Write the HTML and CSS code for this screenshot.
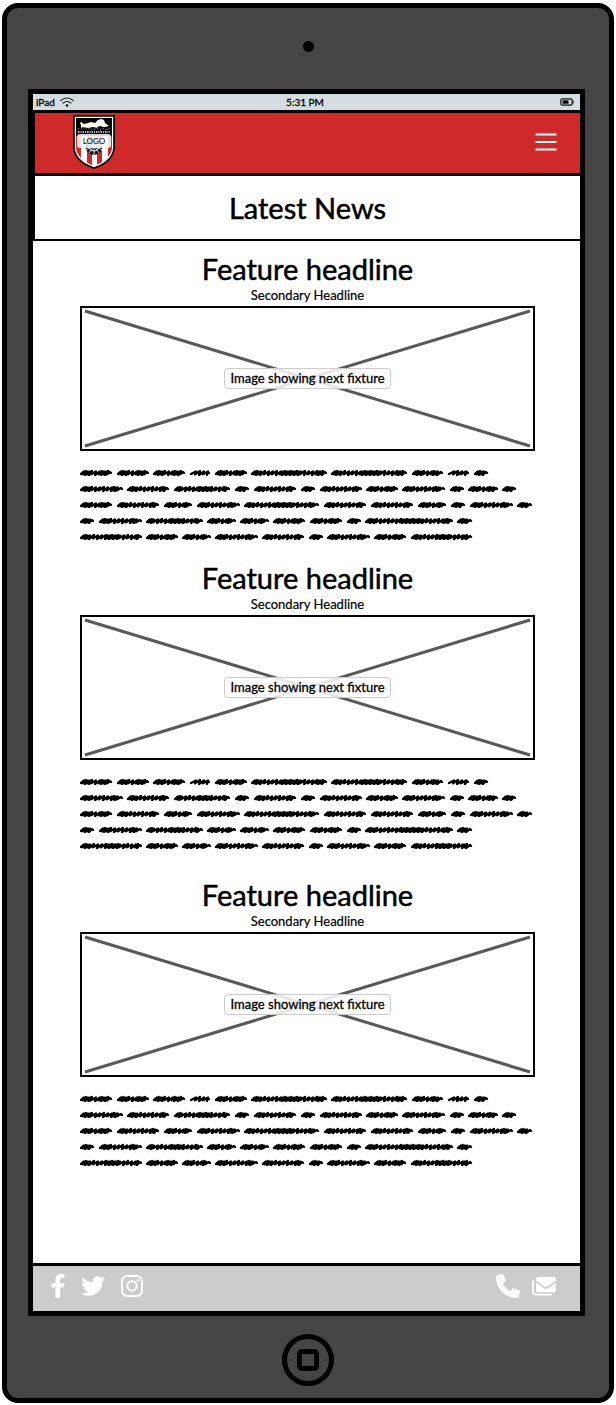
FILE: index.html
```html
<!DOCTYPE html>
<html lang="en">
<head>
<meta charset="utf-8">
<meta name="viewport" content="width=device-width, initial-scale=1">
<title>Latest News</title>
<link rel="stylesheet" href="styles.css">
</head>
<body>
<div class="device">
  <div class="bezel-top"><span class="camera"></span></div>
  <div class="screen">
    <div class="status">
      <span class="carrier">iPad
        <svg class="wifi" viewBox="0 0 14 10" aria-hidden="true"><path d="M.7 3.6Q7-1.6 13.3 3.6M3.2 6Q7 3 10.8 6" fill="none" stroke="#111" stroke-width="1.2" stroke-linecap="round"/><circle cx="7" cy="8.5" r="1.2"/></svg>
      </span>
      <span class="time">5:31 PM</span>
      <span class="power"><svg class="battery" viewBox="0 0 14 8" aria-hidden="true"><rect x=".8" y=".8" width="11.4" height="6.4" rx="1.6" fill="none" stroke="#111" stroke-width="1.2"/><path d="M2.5 2.3h6v3.4h-6z"/><path d="M12.5 2.5h1v3h-1z"/></svg></span>
    </div>
    <header class="navbar">
      <a class="logo" href="#" aria-label="Logo">
        <svg viewBox="0 0 42 54" aria-hidden="true">
          <defs><clipPath id="shield"><path d="M3 3H39V33Q38 44 21 51Q4 44 3 33Z"/></clipPath></defs>
          <path d="M0 0H42V33Q40 48 21 54Q2 48 0 33Z"/>
          <path d="M1.8 1.8H40.2V33Q39 46 21 52.2Q3 46 1.8 33Z" fill="#fff"/>
          <g clip-path="url(#shield)">
            <path d="M3 3h36v18H3z"/>
            <path d="M3 21h5v31H3zM14 21h5v31h-5zM24 21h5v31h-5zM35 21h4v31h-4z" fill="#cf2a29"/>
            <path d="M7 8l1-1 3 2 4-1 3-1 4 1 3-3 3-1 3 1 1 3 4 3-4 1-2 0-3-1-3 1 1 1-5-1-5 1-5-1-2 1 0-3z" fill="#fff"/>
            <path d="M5 13.5l3 1 3-2 3 2 3-1 3 1 4-1 3 1 3-1 3 1 4-1" fill="none" stroke="#fff" stroke-width=".7" stroke-dasharray="1 2"/>
            <path d="M5 17h32" stroke="#fff" stroke-width="1.6" stroke-dasharray="1.5 1 1 1"/>
            <circle cx="21" cy="31.5" r="8.5" fill="#111"/>
            <path d="M21 31v9M21 31l-5 7M21 31l5 7M21 31l-8 4M21 31l8 4M21 22v9M13 28l8 3 8-3" stroke="#fff" stroke-width=".8"/>
            <circle cx="21" cy="31" r="5" fill="none" stroke="#fff"/>
          </g>
        </svg>
        <span class="logo-label">LOGO</span>
      </a>
      <button class="menu" type="button" aria-label="Menu"><svg viewBox="0 0 22 18" aria-hidden="true"><path d="M1.2 1.5h19.6M1.2 9h19.6M1.2 16.5h19.6" stroke="#fff" stroke-width="2.2" stroke-linecap="round"/></svg></button>
    </header>
    <h1 class="page-title">Latest News</h1>
    <main class="feed">
      <article class="story">
        <h2>Feature headline</h2>
        <p class="secondary">Secondary Headline</p>
        <div class="picture"><svg viewBox="0 0 451 141" preserveAspectRatio="none" aria-hidden="true"><path d="M3 3L448 138M448 3L3 138"/></svg><span>Image showing next fixture</span></div>
        <svg class="copy" viewBox="0 0 455 80" role="img" aria-label="Article text"></svg>
      </article>
      <article class="story">
        <h2>Feature headline</h2>
        <p class="secondary">Secondary Headline</p>
        <div class="picture"><svg viewBox="0 0 451 141" preserveAspectRatio="none" aria-hidden="true"><path d="M3 3L448 138M448 3L3 138"/></svg><span>Image showing next fixture</span></div>
        <svg class="copy" viewBox="0 0 455 80" role="img" aria-label="Article text"></svg>
      </article>
      <article class="story story-last">
        <h2>Feature headline</h2>
        <p class="secondary">Secondary Headline</p>
        <div class="picture"><svg viewBox="0 0 451 141" preserveAspectRatio="none" aria-hidden="true"><path d="M3 3L448 138M448 3L3 138"/></svg><span>Image showing next fixture</span></div>
        <svg class="copy" viewBox="0 0 455 80" role="img" aria-label="Article text"></svg>
      </article>
    </main>
    <footer class="footer">
      <nav class="social" aria-label="Social">
        <a href="#" aria-label="Facebook"><svg class="facebook" viewBox="22 0 276 512"><path d="M279.14 288l14.22-92.66h-88.91v-60.13c0-25.35 12.42-50.06 52.24-50.06h40.42V6.26S260.43 0 225.36 0c-73.22 0-121.08 44.38-121.08 124.72v70.62H22.89V288h81.39v224h100.17V288z"/></svg></a>
        <a href="#" aria-label="Twitter"><svg class="twitter" viewBox="0 0 512 512"><path d="M459.37 151.716c.325 4.548.325 9.097.325 13.645 0 138.72-105.583 298.558-298.558 298.558-59.452 0-114.68-17.219-161.137-47.106 8.447.974 16.568 1.299 25.34 1.299 49.055 0 94.213-16.568 130.274-44.832-46.132-.975-84.792-31.188-98.112-72.772 6.498.974 12.995 1.624 19.818 1.624 9.421 0 18.843-1.3 27.614-3.573-48.081-9.747-84.143-51.98-84.143-102.985v-1.299c13.969 7.797 30.214 12.67 47.431 13.319-28.264-18.843-46.781-51.005-46.781-87.391 0-19.492 5.197-37.36 14.294-52.954 51.655 63.675 129.3 105.258 216.365 109.807-1.624-7.797-2.599-15.918-2.599-24.04 0-57.828 46.782-104.934 104.934-104.934 30.213 0 57.502 12.67 76.67 33.137 23.715-4.548 46.456-13.32 66.599-25.34-7.798 24.366-24.366 44.833-46.132 57.827 21.117-2.273 41.584-8.122 60.426-16.243-14.292 20.791-32.161 39.308-52.628 54.253z"/></svg></a>
        <a href="#" aria-label="Instagram"><svg class="instagram" viewBox="0 0 22 22"><rect x="1" y="1" width="20" height="20" rx="5.5" fill="none" stroke="#fff" stroke-width="2"/><circle cx="11" cy="11" r="4.7" fill="none" stroke="#fff" stroke-width="2"/><circle cx="16.8" cy="5.2" r="1.4"/></svg></a>
      </nav>
      <nav class="contact" aria-label="Contact">
        <a href="#" aria-label="Phone"><svg class="phone" viewBox="0 0 512 512"><path d="M164.9 24.6c-7.7-18.6-28-28.5-47.4-23.2l-88 24C12.1 30.2 0 46 0 64C0 311.4 200.6 512 448 512c18 0 33.8-12.1 38.6-29.5l24-88c5.3-19.4-4.6-39.7-23.2-47.4l-96-40c-16.3-6.8-35.2-2.1-46.3 11.6L304.7 368C234.3 334.7 177.3 277.7 144 207.3L193.3 167c13.7-11.2 18.4-30 11.6-46.3l-40-96z"/></svg></a>
        <a href="#" aria-label="Mail"><svg class="mail" viewBox="0 0 24 19"><path d="M6 0H22Q24 0 24 2V3.4L15.3 9.8Q14 10.6 12.7 9.8L4 3.4V2Q4 0 6 0Z"/><path d="M4 5.2L12 11.2Q14 12.4 16 11.2L24 5.2V13Q24 15.2 22 15.2H6Q4 15.2 4 13Z"/><path d="M1 3.8V14Q1 17.7 4.5 17.7H19" fill="none" stroke="#fff" stroke-width="1.7" stroke-linecap="round"/></svg></a>
      </nav>
    </footer>
  </div>
  <div class="bezel-bottom"><button class="home" type="button" aria-label="Home"><span></span></button></div>
</div>
<script src="scribble.js"></script>
</body>
</html>
```
FILE: styles.css
```css
* { box-sizing: border-box; }

body {
  margin: 0;
  padding: 3px 2px 2px;
  background: #fff;
  color: #000;
  font-family: Lato, "Open Sans", sans-serif;
}

h1, h2, p { margin: 0; font-weight: 400; }
svg { display: block; }
button { padding: 0; border: 0; background: none; }

.device {
  display: flex;
  flex-direction: column;
  min-height: calc(100vh - 5px);
  border: 5px solid #000;
  border-radius: 16px;
  background: #454545;
}

.bezel-top {
  display: flex;
  align-items: center;
  justify-content: center;
  height: 81px;
  padding-bottom: 5px;
}
.camera { width: 11px; height: 11px; border-radius: 50%; background: #000; }

.screen {
  display: flex;
  flex: 1;
  flex-direction: column;
  margin: 0 24px 0 21px;
  border: 5px solid #000;
  background: #fff;
}

.status {
  display: grid;
  grid-template-columns: 1fr auto 1fr;
  align-items: center;
  height: 16px;
  padding: 0 6px 0 3px;
  background: #d6dde0;
  font-size: 10px;
  line-height: 14px;
  -webkit-text-stroke: 0.3px #000;
}
.carrier { display: flex; align-items: center; gap: 5px; }
.wifi { width: 14px; height: 10px; }
.power { justify-self: end; }
.battery { width: 14px; height: 8px; }

.navbar {
  display: flex;
  justify-content: space-between;
  height: 66px;
  padding: 2px 23px 0 38px;
  border: 2px solid #000;
  border-width: 3px 0 3px 2px;
  background: #cf2a29;
}
.logo { position: relative; width: 42px; height: 54px; color: #000; text-decoration: none; }
.logo svg { width: 42px; height: 54px; }
.logo-label {
  position: absolute;
  top: 19px;
  left: 4px;
  width: 34px;
  border-radius: 3px;
  background: rgba(255, 255, 255, 0.85);
  font-size: 8px;
  line-height: 14px;
  text-align: center;
}
.menu { align-self: flex-start; margin-top: 18px; }
.menu svg { width: 22px; height: 18px; }

.page-title {
  border: solid #000;
  border-width: 0 0 2px 2px;
  font-size: 29px;
  line-height: 63px;
  text-align: center;
  -webkit-text-stroke: 0.5px #000;
}

.feed { flex: 1; padding: 10px 45px 24px 47px; }
.story { margin-bottom: 15px; text-align: center; }
.story-last { margin-top: 23px; }
.story h2 { font-size: 29px; line-height: 36px; -webkit-text-stroke: 0.5px #000; }
.secondary { font-size: 13px; line-height: 16px; -webkit-text-stroke: 0.2px #000; }

.picture {
  display: grid;
  place-items: center;
  height: 145px;
  margin: 3px 0 14px;
  border: 2px solid #000;
}
.picture > * { grid-area: 1 / 1; }
.picture svg { width: 100%; height: 141px; fill: none; stroke: #595959; stroke-width: 3; }
.picture span {
  z-index: 1;
  padding: 0 5px;
  border: 1px solid #ccc;
  border-radius: 4px;
  background: rgba(255, 255, 255, 0.85);
  font-size: 13px;
  line-height: 19px;
  -webkit-text-stroke: 0.3px #000;
}

.copy { width: 100%; fill: none; stroke: #000; stroke-width: 2.3; stroke-linecap: round; stroke-linejoin: round; }

.footer {
  display: flex;
  justify-content: space-between;
  height: 48px;
  padding: 8px 24px 0 18px;
  border-top: 3px solid #000;
  background: #ccc;
}
.footer svg { fill: #fff; }
.social, .contact { display: flex; height: 24px; align-items: center; }
.social { gap: 16px; }
.contact { gap: 12px; }
.facebook { width: 14px; height: 24px; }
.twitter { width: 24px; height: 24px; }
.instagram { width: 22px; height: 22px; }
.phone { width: 24px; height: 24px; }
.mail { width: 24px; height: 19px; }

.bezel-bottom { display: flex; align-items: center; justify-content: center; height: 82px; padding-top: 5px; }
.home {
  display: flex;
  align-items: center;
  justify-content: center;
  width: 52px;
  height: 52px;
  border: 5px solid #000;
  border-radius: 50%;
}
.home span { width: 22px; height: 22px; border: 5px solid #000; border-radius: 5px; }
```
FILE: scribble.js
```js
// Each word is [start, end]; its width selects the rhythm of the pen strokes.
const lines = [
  [[0,32],[37,69],[73,105],[110,130],[135,167],[171,247],[251,327],[332,363],[368,389],[394,408]],
  [[0,43],[47,89],[94,150],[155,169],[174,216],[221,235],[240,282],[286,318],[322,365],[370,384],[388,418],[422,436]],
  [[0,32],[37,79],[84,112],[117,160],[164,239],[244,286],[291,333],[338,366],[371,385],[390,433],[437,452]],
  [[0,14],[19,62],[66,123],[127,156],[160,189],[193,225],[230,262],[267,281],[285,373],[377,392]],
  [[0,62],[66,98],[102,131],[135,178],[182,224],[229,243],[247,290],[294,326],[331,392]]
];

// Ranges of a word, as fractions, where the strokes are packed together.
function dense(width, t) {
  if (width < 17) return t < 0.6;
  if (width < 24) return t > 0.5 && t < 0.65;
  if (width < 31) return t < 0.35 || t > 0.6 && t < 0.85;
  if (width < 36) return t > 0.55 && t < 0.85;
  if (width < 50) return t < 0.22 || t > 0.75 && t < 0.92;
  return t < 0.12 || t > 0.38 && t < 0.65 || t > 0.85;
}

function scribble([start, end], y) {
  const width = end - start - 2;
  let x = start + 1;
  let d = `M${x} ${y + 1}`;
  let i = 0;
  while (x < end - 6) {
    const packed = dense(width, (x - start) / width);
    const rise = packed ? 3 : 5;
    const high = y - (i % 3 === 1 ? 2 : 1.5);
    const low = y + (i % 2 ? 2 : 1.3);
    d += `L${x + rise} ${high}L${x + rise - 1} ${low}`;
    x += rise - 1;
    i++;
  }
  return d + `L${end - 2} ${y - 1}L${end - 1} ${y}`;
}

const path = lines.map((words, row) => words.map(word => scribble(word, 8 + row * 16)).join("")).join("");
document.querySelectorAll(".copy").forEach(svg => {
  const el = document.createElementNS("http://www.w3.org/2000/svg", "path");
  el.setAttribute("d", path);
  svg.appendChild(el);
});
```
